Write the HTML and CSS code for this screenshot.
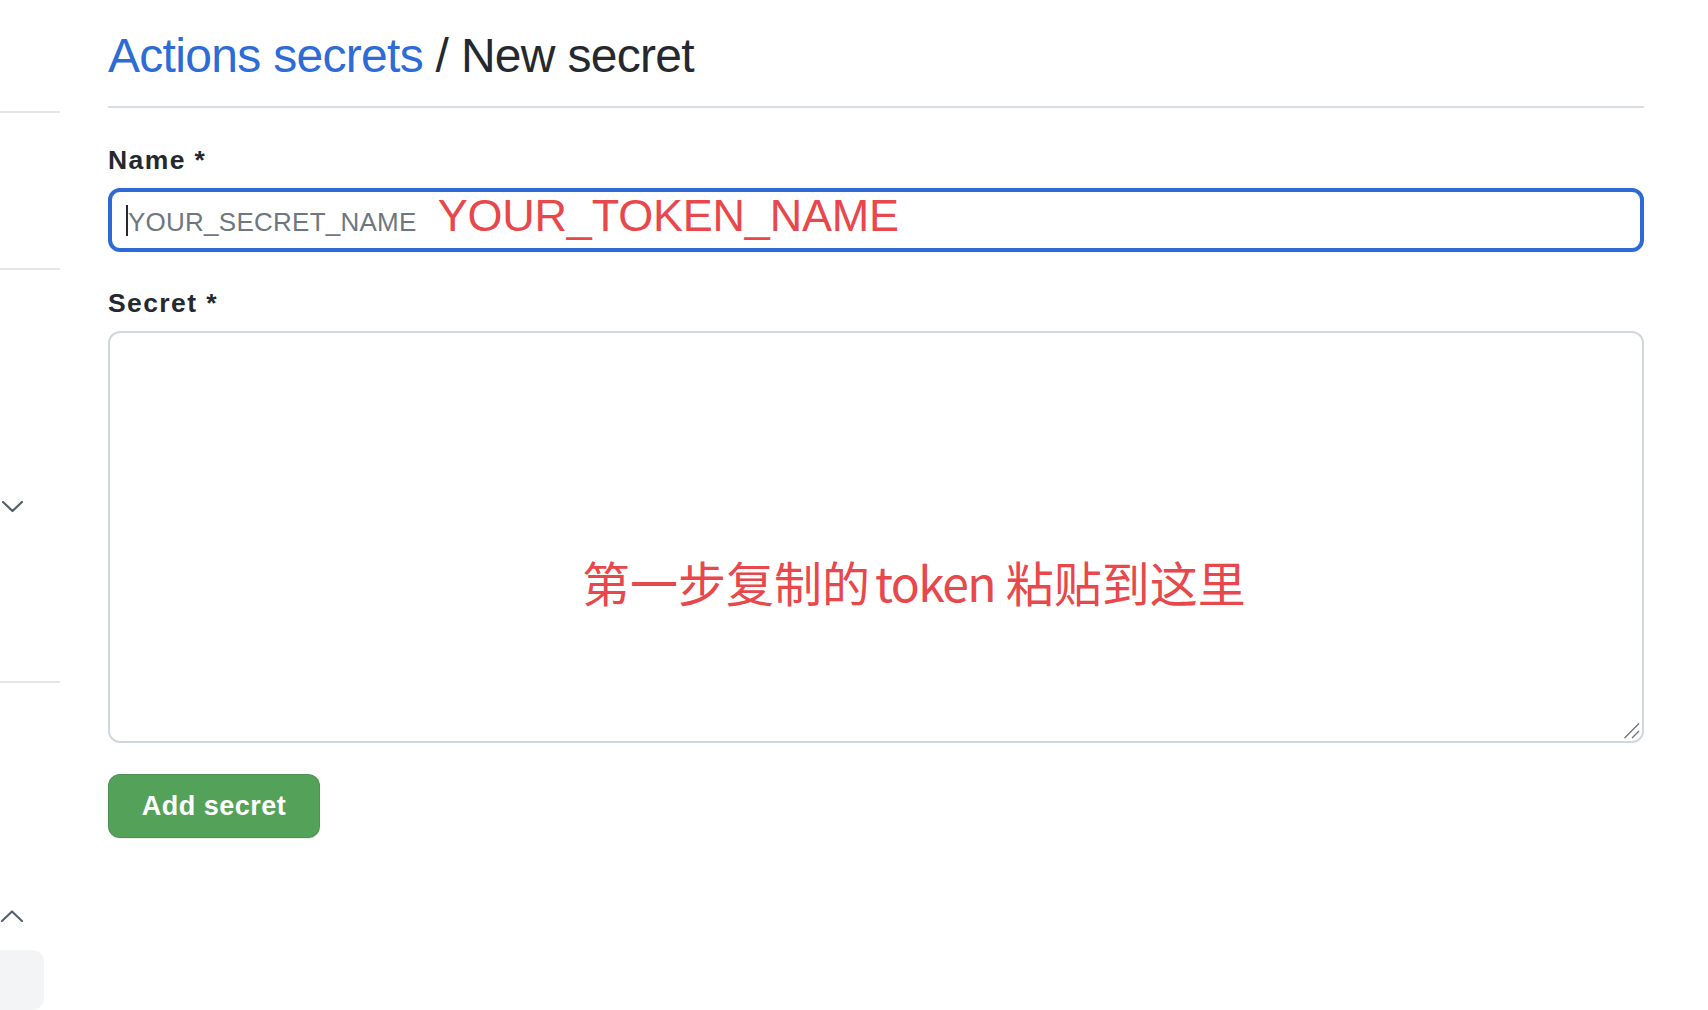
FILE: index.html
```html
<!DOCTYPE html>
<html lang="zh-CN">
<head>
<meta charset="utf-8">
<title>Actions secrets / New secret</title>
<link rel="stylesheet" href="styles.css">
</head>
<body>
<div class="page">
  <aside class="sidebar">
    <div class="side-seg seg-top"></div>
    <div class="side-rule"></div>
    <div class="side-seg seg-a"></div>
    <div class="side-rule"></div>
    <div class="side-seg seg-b">
      <svg class="chev" width="24" height="12" viewBox="0 0 24 12"><polyline points="3,1 12.5,10 22,1" fill="none" stroke="#57606a" stroke-width="2.2" stroke-linecap="round" stroke-linejoin="round"/></svg>
    </div>
    <div class="side-rule"></div>
    <div class="side-seg seg-c">
      <svg class="chev" width="24" height="12" viewBox="0 0 24 12"><polyline points="2,11 12,1.5 22,11" fill="none" stroke="#57606a" stroke-width="2.2" stroke-linecap="round" stroke-linejoin="round"/></svg>
    </div>
    <div class="side-block"></div>
  </aside>

  <main class="main">
    <h1 class="title"><a class="crumb" href="#">Actions secrets</a> / New secret</h1>

    <form class="form">
      <div class="group">
        <label class="label">Name *</label>
        <div class="input">
          <span class="caret"></span>
          <span class="placeholder">YOUR_SECRET_NAME</span>
          <span class="note-name">YOUR_TOKEN_NAME</span>
        </div>
      </div>

      <div class="group">
        <label class="label">Secret *</label>
        <div class="textarea">
          <span class="note-secret">第一步复制的<span class="latin">token</span> 粘贴到这里</span>
          <svg class="grip" width="16" height="16" viewBox="0 0 16 16"><line x1="0.5" y1="15" x2="15" y2="0.5" stroke="#6a6f75" stroke-width="1.2"/><line x1="8" y1="15" x2="15" y2="8" stroke="#6a6f75" stroke-width="1.2"/></svg>
        </div>
      </div>

      <button type="button" class="btn">Add secret</button>
    </form>
  </main>
</div>
</body>
</html>
```

FILE: styles.css
```css
* { box-sizing: border-box; }

html, body {
  margin: 0;
  padding: 0;
  background: #ffffff;
}

body {
  font-family: "Liberation Sans", Arial, "Noto Sans CJK SC", sans-serif;
  color: #24292f;
}

.page {
  display: flex;
  height: 1010px;
  overflow: hidden;
}

/* ---------- left sidebar fragment ---------- */
.sidebar {
  width: 60px;
  flex: 0 0 60px;
  display: flex;
  flex-direction: column;
}

.side-rule {
  height: 2px;
  background: #e4e7ea;
}

.seg-top { height: 111px; }
.seg-a { height: 155px; }
.seg-b { height: 411px; padding-top: 231px; }
.seg-c { height: 267px; padding-top: 227px; }

.chev { display: block; }

.side-block {
  width: 44px;
  height: 60px;
  background: #f3f4f6;
  border-radius: 0 12px 12px 0;
}

/* ---------- main ---------- */
.main {
  margin-left: 48px;
  width: 1536px;
  flex: 0 0 1536px;
}

.title {
  margin: 0;
  padding: 28px 0 22px;
  font-size: 48px;
  line-height: 56px;
  font-weight: 400;
  letter-spacing: -0.7px;
  color: #24292f;
  border-bottom: 2px solid #d8dee4;
}

.crumb {
  color: #2d6bd6;
  text-decoration: none;
}

.form {
  padding-top: 36px;
}

.group {
  margin-bottom: 35px;
}

.label {
  display: block;
  font-size: 26.5px;
  line-height: 32px;
  font-weight: 700;
  letter-spacing: 1.4px;
  color: #24292f;
  margin-bottom: 12px;
}

.input {
  height: 64px;
  border: 4px solid #2d6ad6;
  border-radius: 12px;
  padding-left: 14px;
  display: flex;
  align-items: baseline;
}

.caret {
  display: inline-block;
  align-self: flex-start;
  width: 2px;
  height: 31px;
  margin-top: 13px;
  background: #24292f;
}

.placeholder {
  margin-left: 0;
  font-size: 26px;
  line-height: 32px;
  color: #6e7781;
  letter-spacing: 0.25px;
}

.note-name {
  margin-left: 21px;
  font-size: 45px;
  line-height: 48px;
  color: #e8474b;
  letter-spacing: -0.2px;
}

.textarea {
  position: relative;
  height: 412px;
  border: 2px solid #d0d7de;
  border-radius: 12px;
  padding: 224px 0 0 472px;
}

.note-secret {
  display: block;
  font-family: "Noto Sans CJK SC", "Liberation Sans", sans-serif;
  font-size: 48px;
  line-height: 48px;
  color: #e8474b;
  white-space: nowrap;
}

.latin {
  margin-left: 5px;
  letter-spacing: -1.6px;
}

.grip {
  position: absolute;
  right: 2px;
  bottom: 2px;
}

.btn {
  display: block;
  width: 212px;
  height: 64px;
  padding: 0;
  margin-top: -4px;
  border: 1px solid rgba(27, 31, 36, 0.12);
  border-radius: 12px;
  background: #54a259;
  box-shadow: 0 1px 0 rgba(27, 31, 36, 0.08);
  color: #ffffff;
  font-family: "Liberation Sans", Arial, sans-serif;
  font-size: 27px;
  line-height: 62px;
  font-weight: 700;
  letter-spacing: 0.5px;
  text-align: center;
  cursor: pointer;
}
```
